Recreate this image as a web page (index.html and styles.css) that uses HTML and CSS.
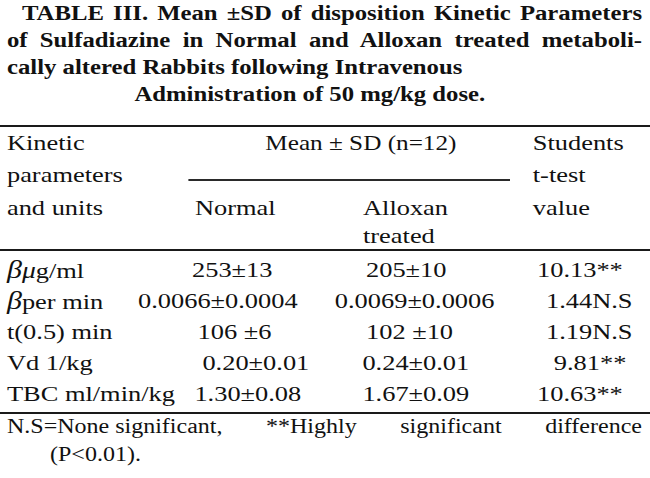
FILE: index.html
```html
<!DOCTYPE html>
<html lang="en">
<head>
<meta charset="utf-8">
<title>Table III</title>
<link rel="stylesheet" href="styles.css">
</head>
<body>
<div class="page">
  <div class="caption">
    <div class="cap-line just first">TABLE III. Mean ±SD of disposition Kinetic Parameters</div>
    <div class="cap-line just">of Sulfadiazine in Normal and Alloxan treated metaboli-</div>
    <div class="cap-line">cally altered Rabbits following Intravenous</div>
    <div class="cap-line indent">Administration of 50 mg/kg dose.</div>
  </div>
  <div class="rule rule-top"></div>
  <div class="head">
    <div class="c1 r1">Kinetic</div>
    <div class="mean r1">Mean ± SD (n=12)</div>
    <div class="c4 r1">Students</div>
    <div class="c1 r2">parameters</div>
    <div class="mean-rule r2"></div>
    <div class="c4 r2">t-test</div>
    <div class="c1 r3">and units</div>
    <div class="c2 r3 normal">Normal</div>
    <div class="c3 r3">Alloxan</div>
    <div class="c4 r3">value</div>
    <div class="c3 r4 treated">treated</div>
  </div>
  <div class="rule"></div>
  <div class="body">
    <div class="lbl"><i class="greek">β</i><i class="greek mu">μ</i>g/ml</div>
    <div>253±13</div>
    <div class="n3">205±10</div>
    <div>10.13**</div>

    <div class="lbl"><i class="greek">β</i>per min</div>
    <div class="pull-45">0.0066±0.0004</div>
    <div class="pull-23">0.0069±0.0006</div>
    <div class="n7">1.44N.S</div>

    <div class="lbl">t(0.5) min</div>
    <div class="n4">106 ±6</div>
    <div class="n3">102 ±10</div>
    <div class="n7">1.19N.S</div>

    <div class="lbl">Vd 1/kg</div>
    <div class="n8">0.20±0.01</div>
    <div>0.24±0.01</div>
    <div class="n14">9.81**</div>

    <div class="lbl">TBC ml/min/kg</div>
    <div class="n2">1.30±0.08</div>
    <div>1.67±0.09</div>
    <div>10.63**</div>
  </div>
  <div class="rule rule-foot"></div>
  <div class="foot">
    <div class="foot-line spread">
      <span>N.S=None significant,</span>
      <span>**Highly</span>
      <span>significant</span>
      <span>difference</span>
    </div>
    <div class="foot-line second">(P&lt;0.01).</div>
  </div>
</div>
</body>
</html>
```
FILE: styles.css
```css
html, body {
  margin: 0;
  padding: 0;
  background: #ffffff;
}

body {
  font-family: "Liberation Serif", "Times New Roman", serif;
  color: #111111;
  overflow: hidden;
}

/* the scanned type is set about 20% wider than Times */
.page {
  width: 541.7px;
  transform: scaleX(1.2);
  transform-origin: 0 0;
}

.caption {
  font-weight: bold;
  font-size: 20.6px;
  line-height: 27px;
}

.cap-line {
  padding: 0 6.7px 0 5.8px;
  white-space: nowrap;
}

.cap-line.just {
  text-align: justify;
  text-align-last: justify;
}

.cap-line.first {
  padding-left: 18.3px;
}

.cap-line.indent {
  padding-left: 112px;
}

.rule {
  height: 2px;
  background: #1a1a1a;
}

.rule-top {
  margin-top: 17px;
}

.head {
  display: grid;
  grid-template-columns: 151.7px 145px 141.5px 1fr;
  grid-template-rows: 32px 33px 31px 26px;
  padding-left: 5.8px;
  font-size: 22px;
  line-height: 32px;
  white-space: nowrap;
}

.r1 { grid-row: 1; }
.r2 { grid-row: 2; }
.r3 { grid-row: 3; }
.r4 { grid-row: 4; }

.c1 { grid-column: 1; }
.c2 { grid-column: 2; }
.c3 { grid-column: 3; }
.c4 { grid-column: 4; }

.mean {
  grid-column: 2 / 4;
  text-align: center;
  font-size: 21px;
}

.mean-rule {
  grid-column: 2 / 4;
  align-self: start;
  margin: 20px 19px 0 0;
  height: 2px;
  background: #2a2a2a;
}

.normal {
  padding-left: 5px;
}

.treated {
  line-height: 26px;
}

.body {
  display: grid;
  grid-template-columns: 154.2px 142px 145.5px 1fr;
  grid-auto-rows: 31px;
  padding: 3px 0 0 5.8px;
  font-size: 22px;
  line-height: 31px;
  white-space: nowrap;
}

.greek {
  font-size: 25px;
}

.greek.mu {
  font-size: 23px;
}

.pull-45 { margin-left: -45px; }
.pull-23 { margin-left: -23px; }
.n2 { padding-left: 2px; }
.n3 { padding-left: 3px; }
.n4 { padding-left: 4.6px; }
.n7 { padding-left: 7.5px; }
.n8 { padding-left: 8.7px; }
.n14 { padding-left: 14px; }

.rule-foot {
  margin-top: 3px;
}

.foot {
  font-size: 20px;
}

.foot-line {
  padding: 0 6.7px 0 5.8px;
  line-height: 24px;
}

.foot-line.spread {
  display: flex;
  justify-content: space-between;
}

.foot-line.second {
  padding-left: 41.7px;
  line-height: 32px;
}
```
